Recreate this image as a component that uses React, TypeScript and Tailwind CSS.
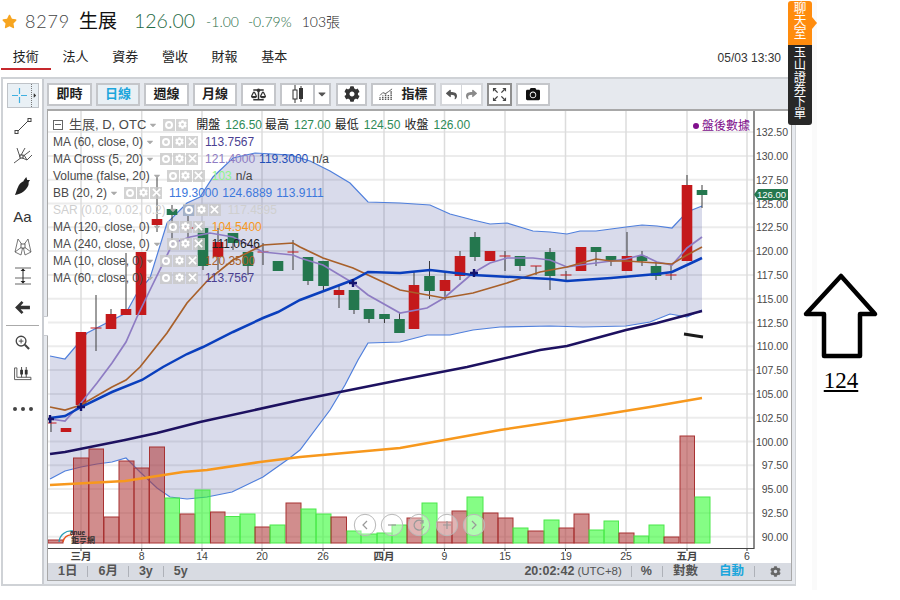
import React from "react";
import { FaBalanceScale, FaCamera, FaCaretDown, FaCaretRight, FaCog, FaReply, FaShare, FaStar } from "react-icons/fa";

const py = (p: number) => 536.7 - (p - 90) * 9.52;
const prices = [132.5, 130, 127.5, 125, 122.5, 120, 117.5, 115, 112.5, 110, 107.5, 105, 102.5, 100, 97.5, 95, 92.5, 90];
const vgrid = [81, 141.7, 202, 262, 323, 384, 444.5, 505, 565.5, 626, 687, 747];
const ticks: [number, string, boolean][] = [
  [81, "三月", true], [141.7, "8", false], [202, "14", false], [262, "20", false], [323, "26", false], [384, "四月", true],
  [444.5, "9", false], [505, "15", false], [566, "19", false], [626, "25", false], [687, "五月", true], [747, "6", false],
];

// x, top, bottom, wickTop, wickBottom, red?
const candles: [number, number, number, number, number, boolean][] = [
  [51, 423, 424, 418, 432, true], [66, 428, 432, 428, 432, true], [81, 332, 405, 332, 405, true], [96, 328, 329, 295, 351, true],
  [111, 314, 329, 309, 329, true], [126, 309, 315, 253, 315, true], [141, 252, 315, 252, 315, true], [157, 219, 225, 177, 232, true],
  [172, 209, 215, 205, 240, false], [188, 228, 229, 213, 245, true], [203, 228, 266, 228, 270, false], [218, 242, 257, 228, 270, true],
  [233, 233, 243, 233, 250, false], [248, 252, 266, 252, 275, false], [263, 252, 253, 243, 265, true], [278, 261, 271, 261, 271, false],
  [293, 252, 253, 240, 270, true], [308, 257, 281, 257, 285, false], [323.5, 261, 286, 261, 291, false], [339, 290, 295, 285, 308, true],
  [354, 290, 310, 290, 314, false], [369, 309, 319, 309, 323, false], [384.5, 314, 319, 314, 323, false], [399.5, 319, 333, 313, 333, false],
  [414, 285, 329, 271, 329, true], [429.5, 276, 291, 261, 299, false], [445, 280, 291, 271, 300, true], [460, 256, 276, 251, 280, true],
  [475, 237, 257, 232, 261, false], [490, 251, 261, 251, 261, true], [505, 256, 257, 251, 271, true], [520, 256, 266, 256, 271, false],
  [536, 266, 267, 266, 275, true], [550, 252, 276, 248, 290, false], [566, 275, 276, 271, 280, true], [581, 247, 271, 247, 271, true],
  [596, 247, 252, 247, 266, false], [611, 256, 261, 256, 266, false], [627, 256, 271, 232, 271, true], [642, 256, 261, 251, 266, false],
  [656, 266, 276, 261, 280, false], [671, 275, 276, 264, 280, true], [687, 185, 261, 175, 261, true], [702, 190, 195, 185, 208, false],
];

// x1, x2, top, red?
const volumes: [number, number, number, boolean][] = [
  [48, 63, 540, true], [73.5, 88.5, 458, true], [89, 103.5, 449, true], [104, 119, 517, true], [119, 134, 461, true], [134, 149, 468, true],
  [149.5, 164.5, 447, true], [165, 179.5, 498, false], [180, 195, 514, true], [195, 210, 490, false], [210.5, 225, 512, true], [225, 240, 516.5, false],
  [240, 255, 514, false], [255, 270, 527, true], [270, 285, 525, false], [286, 301, 503, true], [301, 316, 509, false], [316, 331, 514, false],
  [331, 346.5, 517, true], [347, 361, 531, false], [361, 377, 534, false], [377, 392, 533, false], [392, 407, 525, false], [407, 422, 518, true],
  [422, 437, 503, false], [437, 452, 522, true], [452, 467, 511, true], [467, 483, 497, false], [483, 498, 513, true], [498, 513, 518, true],
  [513, 528, 528, false], [528, 544, 531, true], [544, 559, 520, false], [559, 574, 528, true], [574, 589, 514, true], [589, 604, 530, false],
  [604, 618.5, 521, false], [619, 634, 533, true], [634, 648.5, 536, false], [649, 664, 525, false], [664, 679, 537, true], [680, 694.5, 436, true], [695, 710, 497, false],
];

const upper = "50,356 65,359 87,333 126,313 137,293 150,278 167,223 187,203 200,197 213,177 233,158 255,153 290,155 310,161 330,171 350,183 368,202 400,203 430,205 450,214 473,220 490,224 507,223 533,231 550,232 567,234 580,231 596,231 611,229 626,227 642,225 657,226 672,228 687,212 702,206";
const lower = "50,479 65,471 81,467 97,464 112,462 126,458 140,472 157,488 170,497 187,499 207,497 232,492 263,477 287,460 300,450 330,410 345,385 358,360 368,343 400,342 427,335 450,335 473,330 500,327 550,326 583,327 626,326 650,322 670,314 687,317 702,310";
const purple = "50,419 65,421 81,403 97,383 112,363 126,342 137,317 150,290 173,243 190,237 210,233 233,237 263,252 293,255 300,258 323,265 353,283 368,295 400,313 427,308 444,298 473,273 490,263 507,258 533,258 550,260 567,267 581,265 596,263 611,261 626,259 642,255 657,262 672,265 687,248 702,237";
const brown = "50,407 65,410 81,405 112,387 126,380 140,367 167,333 187,303 208,280 233,260 263,245 293,243 300,247 323,258 353,268 368,275 400,290 444,298 473,293 507,283 540,272 567,267 581,263 596,259 611,261 626,261 642,262 657,263 672,264 687,255 702,247";
const blue = "50,418 65,416 81,407 112,392 142,380 163,367 187,354 203,347 233,332 263,318 278,312 300,300 353,280 368,272 400,273 430,270 473,275 550,279 567,281 611,278 657,274 672,272 687,265 702,258";
const navy = "50,454 65,452 125,440 157,433 200,422 300,400 400,380 467,367 540,350 567,346 626,330 657,323 702,311";
const orange = "50,485 125,481 183,472 207,470 260,462 300,457 400,448 500,430 600,415 650,407 702,398";
const lowerReversed = lower.split(" ").reverse().join(" ");

const ChartPlot = () => (
  <svg viewBox="48 111 742 452" className="block w-[742px] h-[452px]">
    {prices.map((p) => (
      <line key={p} x1={48} x2={754} y1={py(p)} y2={py(p)} stroke="#ececec" strokeWidth={2} />
    ))}
    {vgrid.map((x) => (
      <line key={x} x1={x} x2={x} y1={111} y2={548} stroke="#dcdcdc" strokeWidth={1.5} />
    ))}
    <polygon points={upper + " " + lowerReversed} fill="#3f4a9c" fillOpacity={0.2} />
    <polyline points={upper} fill="none" stroke="#4f7fdc" strokeWidth={1.2} />
    <polyline points={lower} fill="none" stroke="#4f7fdc" strokeWidth={1.2} />

    {volumes.map(([x1, x2, top, red], i) => (
      <rect
        key={i}
        x={x1}
        y={top}
        width={x2 - x1}
        height={543 - top}
        fill={red ? "#b03a3a" : "#2cfb2c"}
        fillOpacity={0.58}
        stroke={red ? "#a83232" : "#4be84b"}
        strokeWidth={1}
      />
    ))}

    <polyline points={orange} fill="none" stroke="#f7981d" strokeWidth={2.6} />
    <polyline points={navy} fill="none" stroke="#1d1160" strokeWidth={2.5} />

    {candles.map(([x, top, bottom, wt, wb, red], i) => {
      const doji = bottom - top <= 1;
      return (
        <g key={i}>
          <line x1={x} x2={x} y1={wt} y2={wb} stroke="#3c3c3c" strokeWidth={1} />
          {doji ? (
            <line x1={x - 5.5} x2={x + 5.5} y1={top} y2={top} stroke="#c8191b" strokeWidth={1} />
          ) : (
            <rect x={x - 5.3} y={top} width={10.6} height={bottom - top} fill={red ? "#c4191b" : "#24774e"} />
          )}
        </g>
      );
    })}

    <polyline points={purple} fill="none" stroke="#8e7cc3" strokeWidth={1.7} />
    <polyline points={brown} fill="none" stroke="#a8602a" strokeWidth={1.7} />
    <polyline points={blue} fill="none" stroke="#0a3fbd" strokeWidth={2.5} />

    {[[50, 419], [81, 407], [353, 283], [474, 273]].map(([x, y]) => (
      <path key={x} d={`M${x - 4} ${y}H${x + 4}M${x} ${y - 4}V${y + 4}`} stroke="#14146e" strokeWidth={2.4} />
    ))}
    <rect x={183} y={205} width={11} height={11} fill="#1155cc" />
    <circle cx={188.5} cy={210.5} r={3} fill="none" stroke="#fff" strokeWidth={1.4} />
    <line x1={684} y1={334} x2={703} y2={337} stroke="#1a1a1a" strokeWidth={2.8} />

    <line x1={754} x2={754} y1={111} y2={549} stroke="#666" strokeWidth={1.5} />
    <line x1={48} x2={754} y1={548.5} y2={548.5} stroke="#444" strokeWidth={1.2} />
    {vgrid.map((x) => (
      <line key={x} x1={x} x2={x} y1={549} y2={551} stroke="#444" />
    ))}
    {prices.map((p) => (
      <text key={p} x={788} y={py(p) + 4} textAnchor="end" fontSize={10.5} fill="#4a4a4a">
        {p.toFixed(2)}
      </text>
    ))}
    {ticks.map(([x, t, bold]) => (
      <text key={x} x={x} y={560} textAnchor="middle" fontSize={10.5} fontWeight={bold ? 700 : 400} fill="#444">
        {t}
      </text>
    ))}

    <polygon points="754,194.5 758,189 788,189 788,200 758,200" fill="#24774e" />
    <text x={786} y={198} textAnchor="end" fontSize={9.5} fill="#fff">
      126.00
    </text>

    <g>
      <path d="M59 542a12 12 0 0 1 14-11" fill="none" stroke="#2a9db5" strokeWidth={1.3} />
      <path d="M63 542a8 8 0 0 1 9-7" fill="none" stroke="#e8561e" strokeWidth={1.3} />
      <text x={70} y={534.5} fontSize={6.5} fontWeight={700} fill="#222">
        anue
      </text>
      <text x={71} y={542.5} fontSize={8} fontWeight={700} fill="#333">
        鉅亨網
      </text>
    </g>

    {[
      [365, "M367 521l-4 4 4 4"],
      [392, "M388 525h8"],
      [419, "M423 522a5 5 0 1 0 1 4M423 520v3h-3"],
      [447, "M443 525h8M447 521v8"],
      [474, "M472 521l4 4-4 4"],
    ].map(([x, d]) => (
      <g key={x as number}>
        <circle cx={x as number} cy={525} r={10.7} fill="#ffffff" fillOpacity={0.35} stroke="#b8b8b8" />
        <path d={d as string} fill="none" stroke="#999" strokeWidth={1.2} />
      </g>
    ))}
  </svg>
);

const LegendIcons = ({ count = 3 }: { count?: number }) => (
  <span className="flex gap-[1px]">
    <span className="flex items-center justify-center w-[12px] h-[12px] bg-[#c8c8c8]/80">
      <span className="w-[8px] h-[8px] rounded-full border-[2px] border-white" />
    </span>
    <span className="flex items-center justify-center w-[12px] h-[12px] bg-[#c8c8c8]/80 text-white">
      <FaCog size={9} />
    </span>
    {count > 2 && (
      <span className="flex items-center justify-center w-[12px] h-[12px] bg-[#c8c8c8]/80 text-white">
        <svg viewBox="0 0 10 10" className="w-[9px] h-[9px]">
          <path d="M1 1l8 8M9 1l-8 8" stroke="currentColor" strokeWidth="1.8" />
        </svg>
      </span>
    )}
  </span>
);

const legendRows = [
  { name: "MA (60, close, 0)", values: [["113.7567", "text-[#4b3f92]"]] },
  { name: "MA Cross (5, 20)", values: [["121.4000", "text-[#8e7cc3]"], ["119.3000", "text-[#1f4fb8]"], ["n/a", "text-[#444]"]] },
  { name: "Volume (false, 20)", values: [["103", "text-[#8ef58e]"], ["n/a", "text-[#444]"]] },
  { name: "BB (20, 2)", values: [["119.3000", "text-[#3d78dc]"], ["124.6889", "text-[#3d78dc]"], ["113.9111", "text-[#3d78dc]"]] },
  { name: "SAR (0.02, 0.02, 0.2)", values: [["117.4595", "text-[#cfcfcf]"]], faded: true },
  { name: "MA (120, close, 0)", values: [["104.5400", "text-[#f7981d]"]] },
  { name: "MA (240, close, 0)", values: [["111.0646", "text-[#222]"]] },
  { name: "MA (10, close, 0)", values: [["120.3500", "text-[#a8602a]"]] },
  { name: "MA (60, close, 0)", values: [["113.7567", "text-[#4b3f92]"]] },
];

const Legend = () => (
  <div className="absolute left-[5px] top-[5px] text-[12px] text-[#4a4a4a]">
    <div className="flex items-center h-[17px]">
      <span className="flex items-center justify-center w-[10px] h-[10px] border border-[#666] mr-[6px]">
        <span className="w-[6px] h-[1px] bg-[#666]" />
      </span>
      <span className="text-[13px]">生展, D, OTC</span>
      <FaCaretDown size={10} className="ml-[2px] text-[#aaa]" />
      <span className="ml-[5px]">
        <LegendIcons count={2} />
      </span>
      <span className="ml-[8px] text-[#222]">開盤</span>
      <span className="ml-[5px] text-[#2e8b57]">126.50</span>
      <span className="ml-[3px] text-[#222]">最高</span>
      <span className="ml-[5px] text-[#2e8b57]">127.00</span>
      <span className="ml-[4px] text-[#222]">最低</span>
      <span className="ml-[5px] text-[#2e8b57]">124.50</span>
      <span className="ml-[4px] text-[#222]">收盤</span>
      <span className="ml-[5px] text-[#2e8b57]">126.00</span>
    </div>
    {legendRows.map((row, i) => (
      <div key={i} className={`flex items-center h-[17px] ${row.faded ? "text-[#cfcfcf]" : ""}`}>
        <span>{row.name}</span>
        <FaCaretDown size={10} className="ml-[2px] text-[#aaa]" />
        <span className="ml-[5px]">
          <LegendIcons />
        </span>
        {row.values.map(([v, color], j) => (
          <span key={j} className={`${j === 0 ? "ml-[7px]" : "ml-[4px]"} ${color}`}>
            {v}
          </span>
        ))}
      </div>
    ))}
  </div>
);

const ToolButton = ({ width, active, children }: { width: string; active?: boolean; children: React.ReactNode }) => (
  <div
    className={`flex items-center justify-center h-[23px] border-2 border-[#c4c6ca] text-[13px] font-bold ${width} ${
      active ? "bg-[#e9f0f5] text-[#1ca6dc]" : "bg-white text-[#222]"
    }`}
  >
    {children}
  </div>
);

const Toolbar = () => (
  <div className="flex items-center gap-[4px] h-[30px] shrink-0">
    <ToolButton width="w-[45px]">即時</ToolButton>
    <ToolButton width="w-[44px]" active>日線</ToolButton>
    <ToolButton width="w-[45px]">週線</ToolButton>
    <ToolButton width="w-[44px]">月線</ToolButton>
    <ToolButton width="w-[35px]">
      <FaBalanceScale size={15} className="text-[#333]" />
    </ToolButton>
    <div className="flex items-center h-[23px] w-[51px] border-2 border-[#c4c6ca] bg-white">
      <div className="flex items-center justify-center w-[33px] h-full border-r-2 border-[#c4c6ca]">
        <svg viewBox="0 0 14 18" className="w-[14px] h-[18px]">
          <path d="M4 0v18M10 1v16" stroke="#333" strokeWidth="1" />
          <rect x="2" y="5" width="4" height="9" fill="#fff" stroke="#333" />
          <rect x="8" y="3" width="4" height="11" fill="#333" />
        </svg>
      </div>
      <FaCaretDown size={12} className="ml-[1px] text-[#555]" />
    </div>
    <ToolButton width="w-[31px] ml-[1px]">
      <FaCog size={16} className="text-[#333]" />
    </ToolButton>
    <ToolButton width="w-[65px]">
      <svg viewBox="0 0 16 14" className="w-[15px] h-[13px] mr-[7px]">
        <path d="M1 13v-3M4 13V8M7 13V6M10 13V7M13 13V3" stroke="#555" strokeWidth="1.6" strokeDasharray="1.4 0.6" />
        <path d="M1 8l3-3 3 1 3-2 4-3" fill="none" stroke="#555" />
      </svg>
      指標
    </ToolButton>
    <div className="flex h-[23px] w-[43px] border-2 border-[#d4d6da] bg-white">
      <div className="flex items-center justify-center flex-1 border-r border-[#d4d6da]">
        <FaReply size={11} className="text-[#555]" />
      </div>
      <div className="flex items-center justify-center flex-1">
        <FaShare size={11} className="text-[#8a8a8a]" />
      </div>
    </div>
    <div className="flex items-center justify-center h-[23px] w-[25px] border-2 border-[#8f8f8f] bg-white">
      <svg viewBox="0 0 16 16" className="w-[15px] h-[15px]">
        <path d="M1 1h4L1 5zM15 1h-4l4 4zM1 15h4l-4-4zM15 15h-4l4-4z" fill="#444" />
        <path d="M3 3l3 3M13 3l-3 3M3 13l3-3M13 13l-3-3" stroke="#444" strokeWidth="1.4" />
      </svg>
    </div>
    <ToolButton width="w-[34px]">
      <FaCamera size={14} className="text-[#111]" />
    </ToolButton>
  </div>
);

const Sep = () => <span className="block w-[1px] h-[11px] bg-[#aeb1b8]" />;

const BottomBar = () => (
  <div className="flex items-center h-[17px] bg-[#d8dbe2] text-[12.5px] font-bold text-[#555] pl-[10px]">
    <span>1日</span>
    <span className="mx-[10px]"><Sep /></span>
    <span>6月</span>
    <span className="mx-[10px]"><Sep /></span>
    <span>3y</span>
    <span className="mx-[10px]"><Sep /></span>
    <span>5y</span>
    <span className="ml-auto">20:02:42</span>
    <span className="ml-[3px] font-normal text-[11.5px]">(UTC+8)</span>
    <span className="mx-[9px]"><Sep /></span>
    <span>%</span>
    <span className="mx-[10px]"><Sep /></span>
    <span>對數</span>
    <span className="ml-[21px] text-[#1ca6dc]">自動</span>
    <span className="mx-[10px]"><Sep /></span>
    <FaCog size={11} className="mr-[10px] ml-[5px] text-[#666]" />
  </div>
);

const SideIcon = ({ className, children }: { className: string; children: React.ReactNode }) => (
  <div className={`flex items-center justify-center text-[#333] ${className}`}>{children}</div>
);

const Sidebar = () => (
  <div className="flex flex-col items-center w-[41px] shrink-0 bg-white border-r-2 border-[#c9ccd1] pt-[4px]">
    <div className="flex w-[32px] h-[25px] bg-[#e9f0f5] border border-[#bfc3c8]">
      <div className="flex items-center justify-center flex-1 border-r border-dotted border-[#777]">
        <svg viewBox="0 0 15 15" className="w-[15px] h-[15px]">
          <path d="M0 7.5h6M9 7.5h6M7.5 0v6M7.5 9v6" stroke="#3fb0e0" strokeWidth="1.2" />
        </svg>
      </div>
      <div className="flex items-center w-[6px]">
        <FaCaretRight size={7} className="text-[#333]" />
      </div>
    </div>
    <SideIcon className="h-[18px] mt-[9px]">
      <svg viewBox="0 0 18 18" className="w-[18px] h-[18px]">
        <path d="M3 15L15 3" stroke="#444" />
        <rect x="1" y="13.5" width="3" height="3" fill="#fff" stroke="#444" />
        <rect x="14" y="1.5" width="3" height="3" fill="#fff" stroke="#444" />
      </svg>
    </SideIcon>
    <SideIcon className="h-[20px] mt-[10px]">
      <svg viewBox="0 0 20 20" className="w-[20px] h-[20px]">
        <path d="M1 18L17 6M7 12L4 3M7 12l5-9M11 10l3 5 5-5M7 12l7 3" fill="none" stroke="#444" strokeWidth="0.9" />
        <rect x="7" y="10" width="3" height="3" fill="#fff" stroke="#444" />
      </svg>
    </SideIcon>
    <SideIcon className="h-[20px] mt-[11px]">
      <svg viewBox="0 0 18 20" className="w-[17px] h-[19px]">
        <path d="M11 4c2-1 4 0 4.500 2 .5 3-2 6-5 9-3 2.500-6 3.500-9.500 4 1-2 2-6 4-10 1.500-2.500 4-4 6-5z" fill="#222" />
        <path d="M10 4l3-4 1 3 3 0-2 3z" fill="#222" />
      </svg>
    </SideIcon>
    <SideIcon className="h-[20px] mt-[11px] text-[15px] font-['Liberation_Sans',sans-serif]">Aa</SideIcon>
    <SideIcon className="h-[20px] mt-[10px]">
      <svg viewBox="0 0 20 20" className="w-[20px] h-[20px]">
        <path d="M5 2L2 15M15 2l3 13M5 2l5 7 5-7M2 15l8-6 8 6M10 9l-2 9M10 9l2 9M2 15l6 3M18 15l-6 3" fill="none" stroke="#555" strokeWidth="0.8" />
        <rect x="8" y="7" width="4" height="4" fill="#fff" stroke="#444" strokeWidth="0.8" />
      </svg>
    </SideIcon>
    <SideIcon className="h-[20px] mt-[9px]">
      <svg viewBox="0 0 16 18" className="w-[16px] h-[18px]">
        <path d="M0 1h16M0 11h16M0 17h16" stroke="#666" />
        <path d="M8 2v14" stroke="#222" />
        <path d="M5.500 4L8 1.500 10.500 4zM5.500 14L8 16.500 10.500 14z" fill="#222" />
      </svg>
    </SideIcon>
    <SideIcon className="h-[16px] mt-[13px]">
      <svg viewBox="0 0 16 14" className="w-[15px] h-[13px]">
        <path d="M7 0l2 2-3 3h10v4H6l3 3-2 2-7-7z" fill="#333" />
      </svg>
    </SideIcon>
    <div className="w-[33px] h-[1px] bg-[#aaa] mt-[10px]" />
    <SideIcon className="h-[16px] mt-[8px]">
      <svg viewBox="0 0 16 16" className="w-[15px] h-[15px]">
        <circle cx="6.500" cy="6.500" r="5.200" fill="none" stroke="#444" strokeWidth="1.400" />
        <path d="M10.500 10.500L15 15" stroke="#444" strokeWidth="2.200" />
        <path d="M4 6.500h5M6.500 4v5" stroke="#444" />
      </svg>
    </SideIcon>
    <SideIcon className="h-[16px] mt-[16px]">
      <svg viewBox="0 0 20 15" className="w-[19px] h-[14px]">
        <path d="M1.500 1v12.500H19M1.500 1H4v10h15v3" fill="none" stroke="#555" />
        <path d="M9 0v11M14 0v11" stroke="#444" />
        <rect x="7.500" y="3" width="3" height="5" fill="#333" />
        <rect x="12.500" y="3" width="3" height="5" fill="#333" />
      </svg>
    </SideIcon>
    <div className="flex gap-[4px] mt-[25px]">
      <span className="w-[4px] h-[4px] rounded-full bg-[#444]" />
      <span className="w-[4px] h-[4px] rounded-full bg-[#444]" />
      <span className="w-[4px] h-[4px] rounded-full bg-[#444]" />
    </div>
  </div>
);

const tabs = ["技術", "法人", "資券", "營收", "財報", "基本"];

const App = () => {
  return (
    <div className="relative flex w-[900px] h-[600px] overflow-hidden bg-white font-['Liberation_Sans','Noto_Sans_CJK_TC',sans-serif]">
      <div className="flex flex-col w-[796px] shrink-0 pl-[1px]">
        {/* Quote header */}
        <div className="flex items-center h-[45px] pb-[3px] pl-[1px] font-['Lato','Noto_Sans_CJK_TC',sans-serif] text-[#222]">
          <FaStar size={15} className="text-[#f7a520]" />
          <span className="ml-[8px] text-[18px] text-[#444] font-light tracking-[0.8px]">8279</span>
          <span className="ml-[9px] text-[19px] text-[#111]">生展</span>
          <span className="ml-[17px] text-[19.5px] font-light text-[#1f6b45]">126.00</span>
          <span className="ml-[11px] text-[14px] font-light text-[#1f6b45]">-1.00</span>
          <span className="ml-[9px] text-[14px] font-light text-[#1f6b45]">-0.79%</span>
          <span className="ml-[10px] text-[14px] font-light text-[#222]">103張</span>
        </div>

        {/* Tabs */}
        <div className="flex items-center h-[25px] shrink-0">
          {tabs.map((t, i) => (
            <div
              key={t}
              className={`flex items-center justify-center w-[49.7px] h-full text-[13px] text-[#222] border-b-2 ${
                i === 0 ? "border-[#c6282d]" : "border-transparent"
              }`}
            >
              {t}
            </div>
          ))}
          <span className="ml-auto mr-[15px] text-[12px] text-[#333]">05/03 13:30</span>
        </div>

        {/* Chart widget */}
        <div className="flex mt-[7px] h-[509px] border-2 border-[#cfd2d6] border-r-[1px] bg-[#e6e9ee]">
          <Sidebar />
          <div className="relative flex flex-col flex-1 pl-[3px] pr-[5px]">
            <Toolbar />
            <div className="w-[745px] border border-[#a8a8a8] border-t-2 bg-white">
              <div className="relative">
                <ChartPlot />
                <Legend />
                <div className="absolute right-[41px] top-[6px] flex items-center text-[12px] text-[#800f8c]">
                  <span className="w-[6px] h-[6px] rounded-full bg-[#800f8c] mr-[3px]" />
                  盤後數據
                </div>
              </div>
              <BottomBar />
            </div>
            <div className="absolute left-0 top-[237px] w-[4px] h-[20px] bg-white border-y border-[#c9ccd1]" />
          </div>
        </div>
      </div>

      {/* Side tabs */}
      <div className="absolute left-[812px] top-0 w-[5px] h-[590px] bg-[#fafafa]" />
      <div className="absolute left-[788px] top-[1px] flex flex-col items-center w-[24px] h-[44px] pt-[1px] rounded-t-[3px] bg-[#ff8c0e] text-white text-[12.7px] leading-[12.7px]">
        <span>聊</span>
        <span>天</span>
        <span>室</span>
        <span className="absolute left-[24px] top-[16px] border-y-[6px] border-y-transparent border-l-[5px] border-l-[#ff8c0e]" />
      </div>
      <div className="absolute left-[788px] top-[45px] flex flex-col items-center w-[24px] h-[80px] pt-[2px] rounded-b-[3px] bg-[#282828] text-white text-[12.3px] leading-[12.3px]">
        <span>玉</span>
        <span>山</span>
        <span>證</span>
        <span>券</span>
        <span>下</span>
        <span>單</span>
      </div>

      {/* Up arrow annotation */}
      <div className="relative flex flex-col items-center ml-[6px] pt-[271px] w-[78px]">
        <svg viewBox="0 0 78 88" className="w-[78px] h-[88px] overflow-visible">
          <polygon points="39,5 73,43 58,43 58,85 22,85 22,43 4,43" fill="none" stroke="#000" strokeWidth="4.500" strokeLinejoin="round" />
        </svg>
        <span className="mt-[9px] text-[23px] leading-[26px] underline text-black font-['Liberation_Serif',serif]">124</span>
      </div>
    </div>
  );
};

export default App;
